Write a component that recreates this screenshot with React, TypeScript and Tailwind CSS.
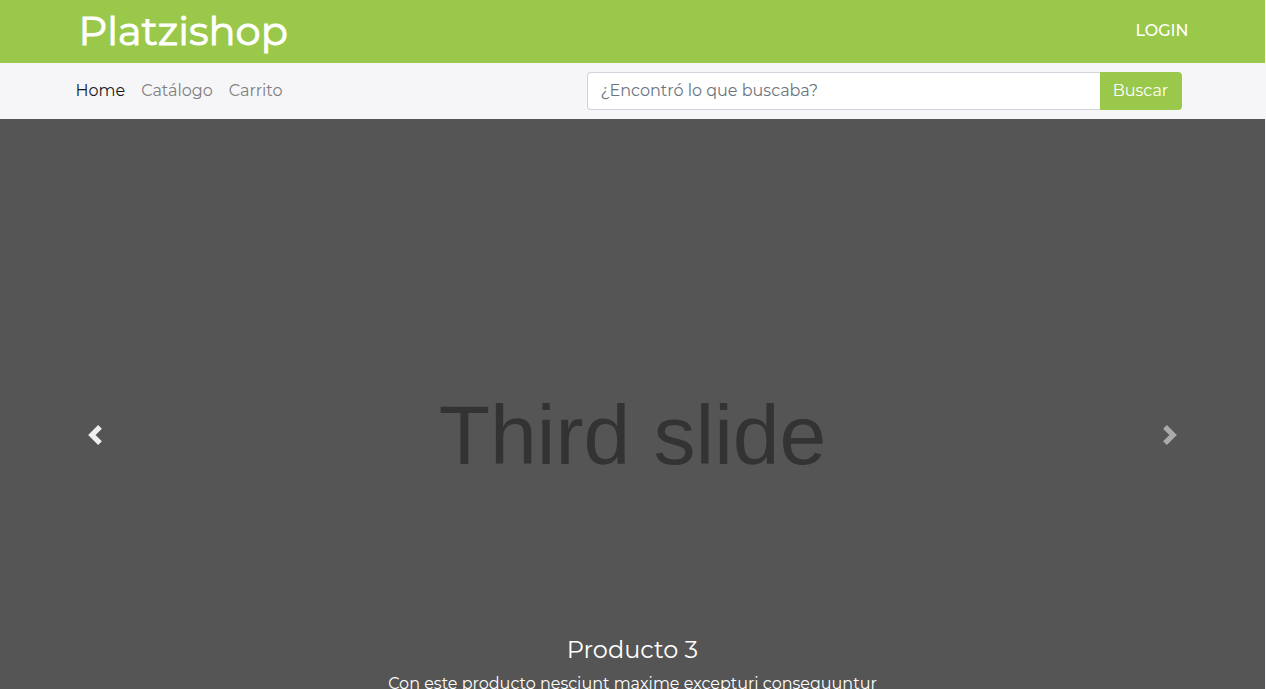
import { useState } from 'react';

const links = ['Home', 'Catálogo', 'Carrito'];

function Header() {
  return (
    <header className="bg-[#9ac84b] text-white">
      <div className="mx-auto flex h-[63px] max-w-[1140px] items-center justify-between pr-[14px] pl-4">
        <h1 className="pb-0.5 text-[40px] leading-[48px] font-normal [-webkit-text-stroke:1px_white]">
          <a href="#home">Platzishop</a>
        </h1>
        <a href="#login" className="pb-0.5 text-base font-medium">
          LOGIN
        </a>
      </div>
    </header>
  );
}

function Navigation() {
  const [query, setQuery] = useState('');
  return (
    <nav className="bg-[#f6f6f9]">
      <div className="mx-auto flex h-14 max-w-[1140px] items-center justify-between pr-[21px] pl-[13px]">
        <ul className="flex gap-4 text-base">
          {links.map((label, i) => (
            <li key={label}>
              <a href="#" className={i === 0 ? 'text-[#191919]' : 'text-[#7f7f80]'}>
                {label}
              </a>
            </li>
          ))}
        </ul>
        <form className="flex h-[38px] w-[595px]" onSubmit={(e) => e.preventDefault()}>
          <input
            type="search"
            aria-label="Buscar productos"
            placeholder="¿Encontró lo que buscaba?"
            value={query}
            onChange={(e) => setQuery(e.target.value)}
            className="min-w-0 flex-1 rounded-l border border-r-0 border-[#ced4da] bg-white px-[13px] text-base text-[#495057] outline-none placeholder:text-[#6c757d]"
          />
          <button type="submit" className="w-[82px] rounded-r bg-[#9ac84b] text-base text-white">
            Buscar
          </button>
        </form>
      </div>
    </nav>
  );
}

function Carousel() {
  return (
    <section className="relative flex aspect-[2/1] items-center justify-center bg-[#555]">
      <span className="font-['Liberation_Sans',Arial,sans-serif] text-[84px] leading-none text-[#333]">
        Third slide
      </span>
      <button
        type="button"
        aria-label="Anterior"
        className="absolute inset-y-0 left-0 flex w-[15%] items-center justify-center text-white opacity-90"
      >
        <svg viewBox="0 0 8 8" className="size-5" fill="currentColor">
          <path d="M5.25 0l-4 4 4 4 1.5-1.5-2.5-2.5 2.5-2.5-1.5-1.5z" />
        </svg>
      </button>
      <button
        type="button"
        aria-label="Siguiente"
        className="absolute inset-y-0 right-0 flex w-[15%] items-center justify-center text-white opacity-50"
      >
        <svg viewBox="0 0 8 8" className="size-5" fill="currentColor">
          <path d="M2.75 0l-1.5 1.5 2.5 2.5-2.5 2.5 1.5 1.5 4-4-4-4z" />
        </svg>
      </button>
      <div className="absolute inset-x-[15%] bottom-5 pb-5 text-center text-white">
        <h5 className="mb-2 text-2xl leading-7">Producto 3</h5>
        <p className="mb-4 text-base">
          Con este producto nesciunt maxime excepturi consequuntur
        </p>
      </div>
    </section>
  );
}

export default function App() {
  return (
    <div className="h-screen overflow-hidden bg-[#f6f6f9] pr-px font-['Montserrat','Inter',sans-serif]">
      <Header />
      <Navigation />
      <main>
        <Carousel />
      </main>
    </div>
  );
}
